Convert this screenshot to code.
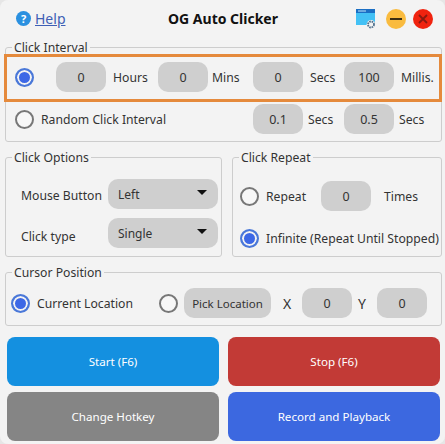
<div class="win">
  <header class="top">
    <span class="help-ic">?</span>
    <span class="help">Help</span>
    <h1>OG Auto Clicker</h1>
    <svg class="settings" viewBox="0 0 20 20" width="20" height="20">
      <rect x="0" y="0" width="19" height="16" fill="#43c1f5" />
      <rect x="0" y="0" width="19" height="4" fill="#1b6fc4" />
      <rect x="2" y="1.5" width="8" height="1" fill="#bfe4fa" />
      <circle cx="15" cy="15.5" r="4.4" fill="#f3f3f3" />
      <circle cx="15" cy="15.5" r="3" fill="none" stroke="#51708c" stroke-width="1.8" stroke-dasharray="1.6 0.8" />
    </svg>
    <svg class="ctl" viewBox="0 0 20 20" width="20" height="20">
      <circle cx="10" cy="10" r="10" fill="#f9bb3f" />
      <rect x="4" y="9" width="12" height="2" fill="#3a2c10" />
    </svg>
    <svg class="ctl" viewBox="0 0 20 20" width="20" height="20">
      <circle cx="10" cy="10" r="10" fill="#f0230f" />
      <path d="M6 6l8 8M14 6l-8 8" stroke="#8a1a10" stroke-width="1.8" />
    </svg>
  </header>

  <fieldset class="interval">
    <legend>Click Interval</legend>
    <div class="row r1">
      <span class="radio on"></span>
      <span class="pill first">0</span><span class="lab hours">Hours</span>
      <span class="pill">0</span><span class="lab mins">Mins</span>
      <span class="pill">0</span><span class="lab secs">Secs</span>
      <span class="pill">100</span><span class="lab millis">Millis.</span>
    </div>
    <div class="row r2">
      <span class="radio"></span>
      <span class="lab random">Random Click Interval</span>
      <span class="pill">0.1</span><span class="lab s1">Secs</span>
      <span class="pill">0.5</span><span class="lab s1">Secs</span>
    </div>
    <div class="highlight"></div>
  </fieldset>

  <div class="split">
    <fieldset class="options">
      <legend>Click Options</legend>
      <div class="opt"><span class="lab name">Mouse Button</span><span class="select"><span>Left</span><i></i></span></div>
      <div class="opt"><span class="lab name low">Click type</span><span class="select"><span>Single</span><i></i></span></div>
    </fieldset>
    <fieldset class="repeat">
      <legend>Click Repeat</legend>
      <div class="row rep1">
        <span class="radio"></span><span class="lab rep">Repeat</span>
        <span class="pill">0</span><span class="lab times">Times</span>
      </div>
      <div class="row rep2">
        <span class="radio on"></span><span class="lab inf">Infinite (Repeat Until Stopped)</span>
      </div>
    </fieldset>
  </div>

  <fieldset class="cursor">
    <legend>Cursor Position</legend>
    <div class="row">
      <span class="radio on"></span><span class="lab cur">Current Location</span>
      <span class="radio"></span><span class="pick">Pick Location</span>
      <span class="lab x">X</span><span class="pill">0</span>
      <span class="lab y">Y</span><span class="pill">0</span>
    </div>
  </fieldset>

  <div class="actions">
    <button class="start">Start (F6)</button>
    <button class="stop">Stop (F6)</button>
    <button class="hot">Change Hotkey</button>
    <button class="rec">Record and Playback</button>
  </div>
</div>

<style>
  :global(body) { margin: 0; background: #e6e6e6; }
  .win {
    width: 445px; height: 444px; box-sizing: border-box; overflow: hidden;
    background: #f3f3f3; border-radius: 8px; padding: 0 3px 0 5px;
    font-family: "Noto Sans", "Open Sans", sans-serif; font-size: 12px; color: #333;
  }
  .top { display: flex; align-items: center; height: 37px; position: relative; padding-left: 11px; }
  .help-ic {
    width: 15px; height: 15px; border-radius: 50%; background: #2a90e0; color: #fff;
    font-size: 11px; font-weight: 700; display: flex; align-items: center; justify-content: center;
  }
  .help { margin-left: 4px; width: 31px; color: #3f5fb5; font-size: 14px; text-decoration: underline; }
  h1 { font-size: 14px; font-weight: 700; color: #111; margin: 0 0 0 102px; width: 113px; white-space: nowrap; }
  .settings { margin-left: 75px; }
  .ctl { margin-left: 10px; }
  .ctl + .ctl { margin-left: 7px; }

  fieldset { margin: 0; padding: 0; border: 1px solid #cdcdcd; border-radius: 3px; box-sizing: border-box; min-width: 0; }
  legend { padding: 2px 2px 0; margin-left: 6px; font-size: 12.2px; color: #333; line-height: 14px; }

  .interval { height: 103px; position: relative; margin-top: 2px; }
  .row { display: flex; align-items: center; }
  .r1 { height: 30px; margin-top: 7px; padding-left: 9px; }
  .r2 { height: 30px; margin-top: 12px; padding-left: 9px; }
  .highlight { position: absolute; left: -2px; right: -1px; top: -1px; height: 48px; box-sizing: border-box; border: 3px solid #e58a3c; }

  .radio { flex: none; width: 19px; height: 19px; box-sizing: border-box; border-radius: 50%; border: 2px solid #777; background: #f7f7f7; }
  .radio.on { border-color: #4a78d8; background: #3d68e6; box-shadow: inset 0 0 0 2px #f3f3f3; }

  .pill {
    flex: none; width: 50px; height: 30px; border-radius: 10px; background: #cfcfcf;
    display: flex; align-items: center; justify-content: center; font-size: 12.5px;
  }
  .lab { white-space: nowrap; font-size: 12.2px; }
  .first { margin-left: 22px; }
  .hours { margin-left: 7px; width: 45px; }
  .mins { margin-left: 4px; width: 41px; }
  .secs { margin-left: 7px; width: 34px; }
  .millis { margin-left: 7px; }
  .random { margin-left: 7px; width: 212px; }
  .s1 { margin-left: 5px; width: 36px; }

  .split { display: grid; grid-template-columns: 217px 210px; gap: 10px; margin-top: 7px; }
  .options, .repeat { height: 108px; }
  .opt { display: flex; align-items: center; height: 30px; padding-left: 15px; margin-top: 9px; }
  .opt:first-of-type { margin-top: 14px; }
  .name { width: 87px; padding-top: 2px; }
  .name.low { padding-top: 6px; }
  .select {
    flex: none; width: 110px; height: 30px; border-radius: 10px; background: #cfcfcf; box-sizing: border-box;
    padding: 0 11px 0 10px; display: flex; align-items: center; justify-content: space-between;
  }
  .select i { width: 0; height: 0; margin-top: -4px; border-left: 5px solid transparent; border-right: 5px solid transparent; border-top: 5px solid #111; }
  .rep1 { height: 30px; margin-top: 16px; padding-left: 7px; }
  .rep2 { height: 30px; margin-top: 12px; padding-left: 7px; }
  .rep { margin-left: 7px; width: 55px; }
  .times { margin-left: 13px; }
  .inf { margin-left: 7px; }

  .cursor { height: 62px; margin-top: 7px; }
  .cursor .row { height: 30px; margin-top: 8px; padding-left: 5px; }
  .cur { margin-left: 7px; width: 122px; }
  .pick {
    flex: none; margin-left: 6px; width: 87px; height: 30px; border-radius: 10px; background: #cfcfcf;
    display: flex; align-items: center; justify-content: center; font-size: 11.5px;
  }
  .x { margin-left: 12px; width: 19px; font-size: 14px; }
  .y { margin-left: 6px; width: 19px; font-size: 14px; }

  .actions { display: grid; grid-template-columns: 212px 212px; column-gap: 9px; row-gap: 6px; margin: 11px 0 0 2px; }
  button {
    height: 49px; border: 0; border-radius: 8px; color: #fff; font: inherit; font-size: 11.6px; padding: 0;
  }
  .start { background: #1490e0; }
  .stop { background: #c23a36; }
  .hot { background: #858585; }
  .rec { background: #3c68e0; }
</style>
